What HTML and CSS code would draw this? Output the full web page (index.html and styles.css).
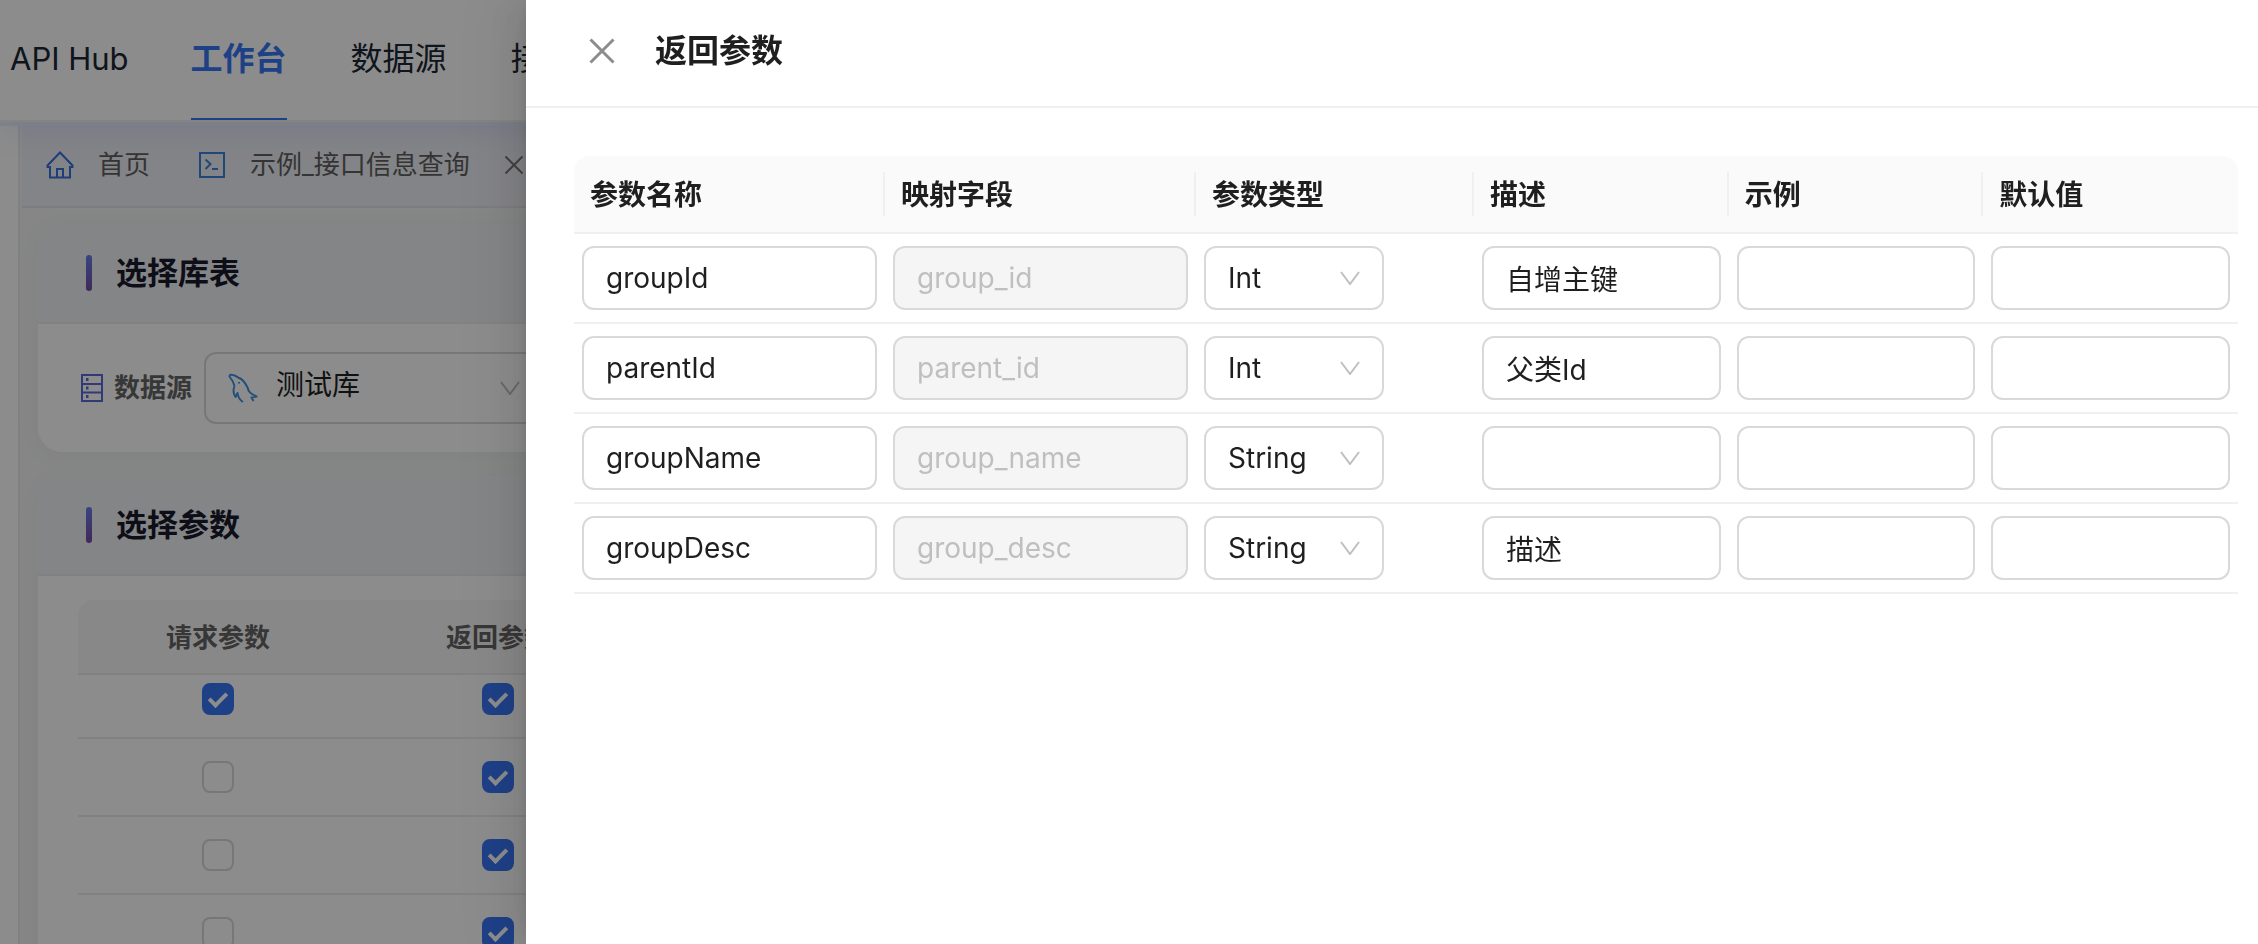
FILE: index.html
```html
<!DOCTYPE html>
<html lang="zh-CN">
<head>
<meta charset="utf-8">
<title>API Hub</title>
<link rel="stylesheet" href="styles.css">
</head>
<body>
<div class="app">
  <header class="topbar">
    <a class="brand" href="#">API Hub</a>
    <nav class="nav">
      <a class="nav-item active" href="#">工作台</a>
      <a class="nav-item" href="#">数据源</a>
      <a class="nav-item" href="#">接口</a>
    </nav>
  </header>
  <div class="workspace">
    <aside class="sidebar"></aside>
    <main class="main">
      <div class="tabs">
        <a class="tab" href="#">
          <svg class="tab-icon home" viewBox="0 0 28 28"><path d="M1.500 14.500 14 1.500 26.500 14.500V16H24V26.500H4V16H1.500ZM11 26.500V18H17V26.500"/></svg>
          <span>首页</span>
        </a>
        <a class="tab" href="#">
          <svg class="tab-icon code" viewBox="0 0 28 28"><path d="M2 2H26V26H2ZM7.500 8.500 12.500 13 7.500 18M14 18H20"/></svg>
          <span>示例_接口信息查询</span>
        </a>
        <button class="tab-close" aria-label="关闭标签"><svg viewBox="0 0 20 20"><path d="M1.500 1.500 18.500 18.500M18.500 1.500 1.500 18.500"/></svg></button>
      </div>
      <section class="card">
        <h2 class="card-head">选择库表</h2>
        <div class="source">
          <svg class="server" viewBox="0 0 24 30"><path d="M2 2H22V28H2ZM2 11H22M2 19.500H22"/><path class="dots" d="M6 6.500H8.500M6 15H8.500M6 23.500H8.500"/></svg>
          <label class="source-label" for="source">数据源</label>
          <div class="select source-select">
            <svg class="dolphin" viewBox="0 0 30 30"><path d="M6.500 13C5.500 8.500 3.500 6 1.500 3.500C1.500 1.500 3 1.500 4.500 2C7 2 8.500 3.500 10 4.500C15 6 17.500 10 19.500 14.500C20.500 18.500 22 20.500 28.500 23.500L23.500 24.500L25.500 28M6.500 13C5 17 5 20.500 7.500 24L9.500 20C10 24 12 27 15 29"/><path d="M11 9V10.500"/></svg>
            <select id="source"><option>测试库</option></select>
            <svg class="arrow" viewBox="0 0 20 14"><path d="M1 1 10 13 19 1"/></svg>
          </div>
        </div>
      </section>
      <section class="card card-params">
        <h2 class="card-head">选择参数</h2>
        <div class="table-box">
          <table class="params">
            <thead><tr><th>请求参数</th><th>返回参数</th><th></th></tr></thead>
            <tbody>
              <tr class="clipped"><td><input type="checkbox" aria-label="请求参数 1" checked></td><td><input type="checkbox" aria-label="返回参数 1" checked></td><td></td></tr>
              <tr><td><input type="checkbox" aria-label="请求参数 2"></td><td><input type="checkbox" aria-label="返回参数 2" checked></td><td></td></tr>
              <tr><td><input type="checkbox" aria-label="请求参数 3"></td><td><input type="checkbox" aria-label="返回参数 3" checked></td><td></td></tr>
              <tr><td><input type="checkbox" aria-label="请求参数 4"></td><td><input type="checkbox" aria-label="返回参数 4" checked></td><td></td></tr>
            </tbody>
          </table>
        </div>
      </section>
    </main>
  </div>
</div>

<div class="mask">
  <section class="drawer" role="dialog" aria-labelledby="drawer-title">
    <header class="drawer-head">
      <button class="drawer-close" aria-label="关闭"><svg viewBox="0 0 26 26"><path d="M1.500 1.500 24.500 24.500M24.500 1.500 1.500 24.500"/></svg></button>
      <h1 id="drawer-title">返回参数</h1>
    </header>
    <div class="drawer-body">
      <table class="fields">
        <colgroup><col class="w-name"><col class="w-name"><col class="w-type"><col><col><col></colgroup>
        <thead>
          <tr><th>参数名称</th><th>映射字段</th><th>参数类型</th><th>描述</th><th>示例</th><th>默认值</th></tr>
        </thead>
        <tbody>
          <tr>
            <td><input aria-label="参数名称" value="groupId"></td>
            <td><input aria-label="映射字段" value="group_id" disabled></td>
            <td><div class="select"><select aria-label="参数类型"><option>Int</option><option>String</option></select><svg class="arrow" viewBox="0 0 20 14"><path d="M1 1 10 13 19 1"/></svg></div></td>
            <td><input aria-label="描述" value="自增主键"></td>
            <td><input aria-label="示例"></td>
            <td><input aria-label="默认值"></td>
          </tr>
          <tr>
            <td><input aria-label="参数名称" value="parentId"></td>
            <td><input aria-label="映射字段" value="parent_id" disabled></td>
            <td><div class="select"><select aria-label="参数类型"><option>Int</option><option>String</option></select><svg class="arrow" viewBox="0 0 20 14"><path d="M1 1 10 13 19 1"/></svg></div></td>
            <td><input aria-label="描述" value="父类Id"></td>
            <td><input aria-label="示例"></td>
            <td><input aria-label="默认值"></td>
          </tr>
          <tr>
            <td><input aria-label="参数名称" value="groupName"></td>
            <td><input aria-label="映射字段" value="group_name" disabled></td>
            <td><div class="select"><select aria-label="参数类型"><option>String</option><option>Int</option></select><svg class="arrow" viewBox="0 0 20 14"><path d="M1 1 10 13 19 1"/></svg></div></td>
            <td><input aria-label="描述"></td>
            <td><input aria-label="示例"></td>
            <td><input aria-label="默认值"></td>
          </tr>
          <tr>
            <td><input aria-label="参数名称" value="groupDesc"></td>
            <td><input aria-label="映射字段" value="group_desc" disabled></td>
            <td><div class="select"><select aria-label="参数类型"><option>String</option><option>Int</option></select><svg class="arrow" viewBox="0 0 20 14"><path d="M1 1 10 13 19 1"/></svg></div></td>
            <td><input aria-label="描述" value="描述"></td>
            <td><input aria-label="示例"></td>
            <td><input aria-label="默认值"></td>
          </tr>
        </tbody>
      </table>
    </div>
  </section>
</div>
</body>
</html>
```
FILE: styles.css
```css
* { box-sizing: border-box; }

body {
  margin: 0;
  overflow: hidden;
  color: #1f1f1f;
  background: #fff;
  font: 28px/44px Inter, "Noto Sans CJK SC", sans-serif;
}

a { color: inherit; text-decoration: none; }
svg { display: block; fill: none; stroke: currentColor; stroke-width: 2; flex: none; }
button { padding: 0; border: 0; background: none; cursor: pointer; }
input, select { font: inherit; color: inherit; }
h1, h2 { margin: 0; }

/* Page behind the drawer */
.app { display: flex; flex-direction: column; height: 100vh; overflow: hidden; isolation: isolate; }

.topbar {
  display: flex;
  gap: 64px;
  flex: none;
  height: 122px;
  padding-left: 10px;
  border-bottom: 2px solid #f0f0f0;
  background: #fff;
  box-shadow: 0 4px 32px rgba(102, 126, 234, .2);
  position: relative;
  font-size: 32px;
  line-height: 118px;
  color: #1c2733;
}
.brand { font-size: 31px; white-space: nowrap; }
.nav { display: flex; gap: 64px; margin-left: -2px; }
.nav-item.active { color: #3875f6; font-weight: 600; box-shadow: inset 0 -2px #3875f6; }

.workspace { display: flex; flex: 1; min-height: 0; padding-top: 4px; background: #f2f2fa; }
.sidebar { width: 20px; border-right: 2px solid #ebebeb; background: #fff; }
.main { flex: 1; padding-left: 2px; background: #f2f5f3; }

.tabs {
  display: flex;
  align-items: center;
  height: 82px;
  padding: 0 0 2px 24px;
  border-bottom: 2px solid #e4e4ea;
  background: #eff0f6;
  font-size: 26px;
  color: #606060;
}
.tab { display: flex; align-items: center; gap: 24px; margin-right: 48px; }
.tab + .tab { margin-right: 34px; }
.tab-icon { width: 28px; height: 28px; }
.tab-icon.home { color: #3a70dc; }
.tab-icon.code { color: #3a84dc; }
.tab-close { color: #777; }
.tab-close svg { width: 20px; height: 20px; }

.card {
  margin: 16px 16px 24px;
  border-radius: 24px;
  background: #fff;
  box-shadow: 0 4px 24px rgba(0, 0, 0, .04);
  overflow: hidden;
}
.card-head {
  display: flex;
  align-items: center;
  gap: 24px;
  height: 100px;
  padding-left: 48px;
  border-bottom: 2px solid #ececee;
  background: #f0f3f6;
  font-size: 31px;
  font-weight: 600;
  color: #1a1a2e;
}
.card-head::before {
  content: "";
  width: 6px;
  height: 36px;
  border-radius: 3px;
  background: linear-gradient(#667eea, #764ba2);
}

.source { display: flex; align-items: center; padding: 28px 42px; }
.server { width: 24px; height: 30px; color: #5a68d8; }
.server .dots { stroke-width: 3; }
.source-label { margin: 0 12px 0 10px; font-size: 26px; font-weight: 600; color: #646464; }

.table-box { padding: 24px 40px; }
.params { width: 100%; border-collapse: separate; border-spacing: 0; table-layout: fixed; }
.params th, .params td { width: 280px; padding: 0; border-bottom: 2px solid #ececec; text-align: center; }
.params th:last-child, .params td:last-child { width: auto; }
.params th { height: 75px; padding-top: 2px; background: #f8f8f8; font-size: 26px; font-weight: 600; color: #646464; }
.params th:first-child { border-top-left-radius: 16px; }
.params td { height: 78px; vertical-align: bottom; padding-bottom: 22px; }
.params .clipped td { height: 64px; }

.params input {
  appearance: none;
  display: block;
  position: relative;
  width: 32px;
  height: 32px;
  margin: 0 auto;
  border: 2px solid #d9d9d9;
  border-radius: 8px;
  background: #fff;
}
.params input:checked { border-color: #3875f6; background: #3875f6; }
.params input:checked::after {
  content: "";
  box-sizing: border-box;
  position: absolute;
  left: 6px;
  top: 50%;
  width: 11px;
  height: 18px;
  border: solid #fff;
  border-width: 0 4px 4px 0;
  transform: rotate(45deg) translate(-50%, -50%);
}

/* Select box with its arrow laid over the right end */
.select { display: grid; align-items: center; width: 180px; }
.select > * { grid-area: 1 / 1; }
.select select {
  appearance: none;
  width: 100%;
  height: 64px;
  padding: 0 22px;
  border: 2px solid #d9d9d9;
  border-radius: 12px;
  background: #fff;
}
.arrow { width: 20px; height: 14px; margin-right: 24px; justify-self: end; color: #bfbfbf; pointer-events: none; }
.source-select { width: 340px; }
.source-select select { height: 72px; padding: 0 70px 6px; }
.dolphin { width: 30px; height: 30px; margin-left: 24px; color: #3d92dc; stroke-linejoin: round; z-index: 1; }

/* Drawer */
.mask {
  position: fixed;
  inset: 0;
  display: grid;
  grid-template-columns: 526px 1fr;
  background: rgba(0, 0, 0, .45);
}
.drawer {
  grid-column: 2;
  background: #fff;
  box-shadow: -12px 0 32px rgba(0, 0, 0, .08), -6px 0 12px -8px rgba(0, 0, 0, .12), -18px 0 56px 16px rgba(0, 0, 0, .05);
}
.drawer-head {
  display: flex;
  align-items: center;
  gap: 40px;
  height: 108px;
  padding: 0 63px 4px;
  border-bottom: 2px solid #f0f0f0;
}
.drawer-close { color: #8c8c8c; }
.drawer-close svg { width: 26px; height: 26px; stroke-width: 3; }
.drawer-head h1 { font-size: 32px; font-weight: 600; }
.drawer-body { padding: 48px 20px 48px 48px; }

.fields { width: 100%; border-collapse: separate; border-spacing: 0; table-layout: fixed; }
.w-name { width: 311px; }
.w-type { width: 278px; }
.fields th {
  height: 78px;
  padding: 2px 16px 0;
  border-bottom: 2px solid #f0f0f0;
  background: linear-gradient(#f0f0f0, #f0f0f0) right center / 2px 44px no-repeat #fafafa;
  text-align: left;
  font-weight: 600;
}
.fields th:first-child { border-top-left-radius: 16px; }
.fields th:last-child { border-top-right-radius: 16px; background: #fafafa; }
.fields td { padding: 12px 8px; border-bottom: 2px solid #f0f0f0; }
.fields input {
  display: block;
  width: 100%;
  height: 64px;
  padding: 0 22px;
  border: 2px solid #d9d9d9;
  border-radius: 12px;
  background: #fff;
}
.fields input:disabled { background: #f5f5f5; color: #bfbfbf; }
```
